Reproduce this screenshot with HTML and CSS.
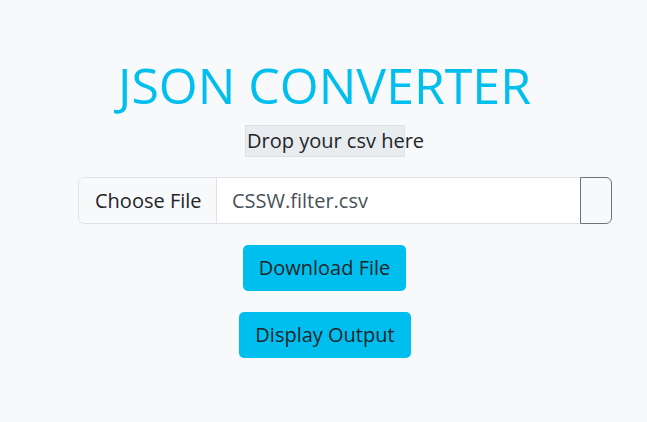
FILE: index.html
```html
<!DOCTYPE html>
<html>
<head>
<meta charset="utf-8">
<link rel="stylesheet" href="styles.css">
</head>
<body>
<main class="page">
  <h1 class="title">JSON CONVERTER</h1>
  <div class="drop"><span class="drop-text">Drop your csv here</span></div>
  <div class="file-row">
    <div class="input-group">
      <span class="choose">Choose File</span>
      <span class="filename">CSSW.filter.csv</span>
    </div>
    <span class="addon"></span>
  </div>
  <button class="btn btn-download">Download File</button>
  <button class="btn btn-display">Display Output</button>
</main>
</body>
</html>
```
FILE: styles.css
```css
html, body {
  margin: 0;
  padding: 0;
  background: #f8f9fa;
  font-family: "Open Sans", "Liberation Sans", sans-serif;
  color: #212529;
}
.page {
  display: flex;
  flex-direction: column;
  align-items: center;
  padding-top: 50px;
}
.title {
  margin: 0 0 0 2px;
  font-size: 50px;
  font-weight: 400;
  line-height: 70px;
  color: #00bfef;
}
.drop {
  margin: 5px 0 0 3px;
  width: 158px;
  height: 30px;
  background: #e9ecef;
  border: 1px solid #dee2e6;
  white-space: nowrap;
}
.drop-text {
  display: block;
  font-size: 20px;
  line-height: 30px;
  padding-left: 1px;
}
.file-row {
  align-self: stretch;
  display: flex;
  margin: 20px 35px 0 78px;
  height: 47px;
}
.input-group {
  flex: 1;
  display: flex;
  border: 1px solid #dee2e6;
  border-right: none;
  border-radius: 6px 0 0 6px;
  background: #fff;
  overflow: hidden;
}
.choose {
  width: 138px;
  background: #f8f9fa;
  border-right: 1px solid #dee2e6;
  font-size: 20px;
  line-height: 45px;
  padding-left: 16px;
  box-sizing: border-box;
}
.filename {
  padding-left: 15px;
  font-size: 20px;
  line-height: 45px;
  color: #495057;
}
.addon {
  width: 30px;
  border: 1px solid #6c757d;
  border-radius: 0 6px 6px 0;
  background: #f8f9fa;
}
.btn {
  font-family: inherit;
  font-size: 20px;
  color: #212529;
  background: #00bfef;
  border: none;
  border-radius: 5px;
  height: 46px;
  padding: 0;
  line-height: 46px;
  white-space: nowrap;
  text-align: center;
}
.btn-download {
  margin: 21px 0 0 2px;
  width: 163px;
}
.btn-display {
  margin: 21px 0 0 3px;
  width: 172px;
}
```
